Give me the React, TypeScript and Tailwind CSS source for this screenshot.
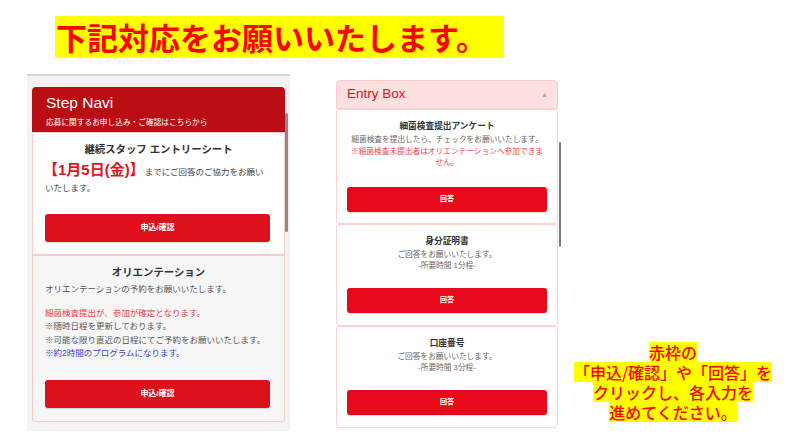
import React from "react";

const JP = "font-['Liberation_Sans','Noto_Sans_CJK_JP',sans-serif]";

function LeftButton() {
  return (
    <div className="w-[225px] h-[28px] rounded-[3px] bg-[#dc111b] flex items-center justify-center text-white text-[8px] font-bold shadow-[0_1px_1px_rgba(0,0,0,0.15)]">
      申込/確認
    </div>
  );
}

function EntryCard({
  title,
  lines,
  red,
  first,
}: {
  title: string;
  lines: string[];
  red?: string[];
  first?: boolean;
}) {
  return (
    <div
      className={`border border-[#fad3d3] rounded-[3px] bg-white px-[10px] pt-[10px] ${
        first ? "pb-[11px]" : "pb-[12px]"
      }`}
    >
      <div className="text-center text-[8.7px] leading-[13px] font-bold text-[#333]">{title}</div>
      <div className="mt-[1px] text-center text-[7.7px] leading-[11.5px] text-[#666]">
        {lines.map((l, i) => (
          <div key={i}>{l}</div>
        ))}
        {red &&
          red.map((l, i) => (
            <div key={"r" + i} className="text-[#f0444c]">
              {l}
            </div>
          ))}
      </div>
      <div
        className={`${first ? "mt-[18px]" : "mt-[16px]"} h-[25px] rounded-[3px] bg-[#e8091a] flex items-center justify-center text-white text-[7px] font-bold shadow-[0_1px_1px_rgba(0,0,0,0.15)]`}
      >
        回答
      </div>
    </div>
  );
}

export default function App() {
  return (
    <div className={`w-[794px] h-[447px] bg-white overflow-hidden ${JP}`}>
      <div className="pt-[16px] pl-[55px]">
        <div className="w-[449px] h-[42px] bg-[#ffff00] pl-[1px] text-[31px] leading-[42px] font-bold text-[#ff0000] font-['Noto_Sans_CJK_JP',sans-serif] whitespace-nowrap">
          下記対応をお願いいたします。
        </div>
      </div>

      <div className="flex items-start mt-[16px]">
        {/* Left phone panel */}
        <div className="relative ml-[27px] w-[263px] border-t-2 border-[#d4d4d4] bg-[#f3f3f3] px-[5px] pt-[11px] pb-[9px]">
          <div className="h-[45px] rounded-t-[4px] bg-[#b90e14] pl-[14px] pt-[7px]">
            <div className="text-[15.5px] leading-[18px] text-white">Step Navi</div>
            <div className="mt-[6px] text-[7.7px] leading-[10px] text-white whitespace-nowrap">
              応募に関するお申し込み・ご確認はこちらから
            </div>
          </div>

          <div className="border border-[#f4cccc] bg-white px-[12px] pt-[10px] pb-[12px]">
            <div className="text-center text-[10.4px] leading-[14px] font-bold text-[#333]">
              継続スタッフ エントリーシート
            </div>
            <div className="mt-[5px] text-[8.5px] leading-[16px] text-[#444] whitespace-nowrap">
              <span className="text-[15px] leading-[16px] font-bold text-[#e0141e] -ml-[2px]">【1月5日(金)】</span>
              までにご回答のご協力をお願い
              <br />
              いたします。
            </div>
            <div className="mt-[18px]">
              <LeftButton />
            </div>
          </div>

          <div className="border border-[#f4cccc] rounded-b-[3px] bg-[#f6f6f6] px-[12px] pt-[10px] pb-[13px]">
            <div className="text-center text-[10.4px] leading-[14px] font-bold text-[#333]">
              オリエンテーション
            </div>
            <div className="mt-[3px] text-[8.5px] leading-[13.5px] text-[#555]">
              オリエンテーションの予約をお願いいたします。
            </div>
            <div className="mt-[10px] text-[8.5px] leading-[13.5px] text-[#555] whitespace-nowrap">
              <div className="text-[#e8424a]">細菌検査提出が、参加が確定となります。</div>
              <div>※随時日程を更新しております。</div>
              <div>※可能な限り直近の日程にてご予約をお願いいたします。</div>
              <div className="text-[#3b3fd8]">※約2時間のプログラムになります。</div>
            </div>
            <div className="mt-[19px]">
              <LeftButton />
            </div>
          </div>

          <div className="absolute left-[258px] top-[37px] w-[3px] h-[119px] rounded-full bg-[#8a8a8a]" />
        </div>

        {/* Right Entry Box */}
        <div className="relative ml-[46px] mt-[6px] w-[222px]">
          <div className="h-[29px] rounded-t-[4px] border border-[#f9cdcd] bg-[#fde1e1] pl-[10px] pr-[9px] flex items-center justify-between">
            <span className="text-[13.5px] text-[#e6101b]">Entry Box</span>
            <span className="text-[7px] leading-[7px] text-[#a8a8a8]">▲</span>
          </div>
          <EntryCard
            first
            title="細菌検査提出アンケート"
            lines={["細菌検査を提出したら、チェックをお願いいたします。"]}
            red={["※細菌検査未提出者はオリエンテーションへ参加できま", "せん。"]}
          />
          <EntryCard title="身分証明書" lines={["ご回答をお願いいたします。", "-所要時間 1分程-"]} />
          <EntryCard title="口座番号" lines={["ご回答をお願いいたします。", "-所要時間 3分程-"]} />
          <div className="absolute left-[223px] top-[62px] w-[2px] h-[105px] rounded-full bg-[#7a7a7a]" />
        </div>

        {/* Annotation */}
        <div className="flex-1 mt-[268px] pr-[6px] flex flex-col items-center text-[16px] leading-[20px] font-medium text-[#ff0000] font-['Noto_Sans_CJK_JP',sans-serif] whitespace-nowrap">
          <div className="bg-[#ffff00]">赤枠の</div>
          <div className="bg-[#ffff00]">「申込/確認」や「回答」を</div>
          <div className="bg-[#ffff00]">クリックし、各入力を</div>
          <div className="bg-[#ffff00]">進めてください。</div>
        </div>
      </div>
    </div>
  );
}
